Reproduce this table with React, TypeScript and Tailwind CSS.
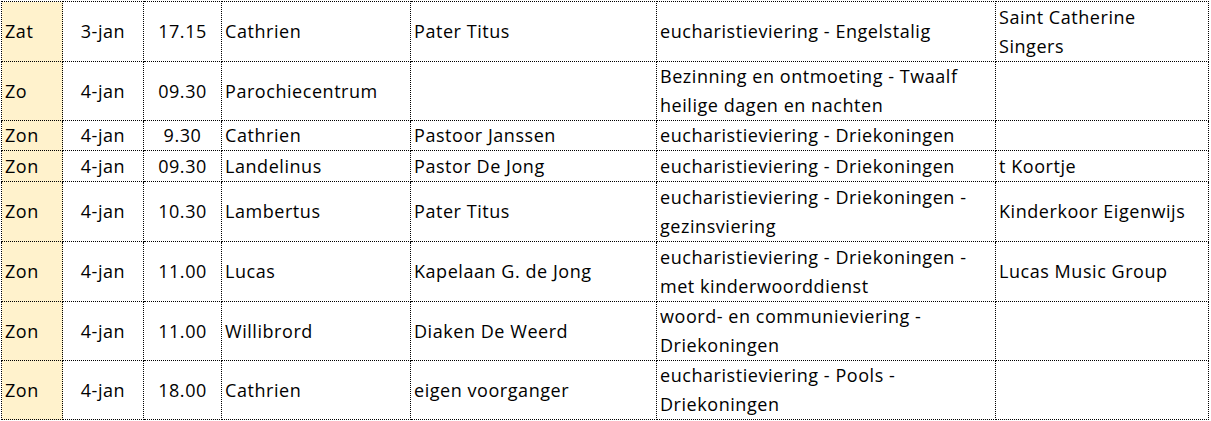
const rows: {
  day: string;
  date: string;
  time: string;
  place: string;
  priest: string;
  desc: string[];
  choir: string[];
  h: string;
}[] = [
  { day: 'Zat', date: '3-jan', time: '17.15', place: 'Cathrien', priest: 'Pater Titus', desc: ['eucharistieviering - Engelstalig'], choir: ['Saint Catherine', 'Singers'], h: 'h-[60px]' },
  { day: 'Zo', date: '4-jan', time: '09.30', place: 'Parochiecentrum', priest: '', desc: ['Bezinning en ontmoeting - Twaalf', 'heilige dagen en nachten'], choir: [], h: 'h-[59px]' },
  { day: 'Zon', date: '4-jan', time: '9.30', place: 'Cathrien', priest: 'Pastoor Janssen', desc: ['eucharistieviering - Driekoningen'], choir: [], h: 'h-[30px]' },
  { day: 'Zon', date: '4-jan', time: '09.30', place: 'Landelinus', priest: 'Pastor De Jong', desc: ['eucharistieviering - Driekoningen'], choir: ['t Koortje'], h: 'h-[31px]' },
  { day: 'Zon', date: '4-jan', time: '10.30', place: 'Lambertus', priest: 'Pater Titus', desc: ['eucharistieviering - Driekoningen -', 'gezinsviering'], choir: ['Kinderkoor Eigenwijs'], h: 'h-[60px]' },
  { day: 'Zon', date: '4-jan', time: '11.00', place: 'Lucas', priest: 'Kapelaan G. de Jong', desc: ['eucharistieviering - Driekoningen -', 'met kinderwoorddienst'], choir: ['Lucas Music Group'], h: 'h-[60px]' },
  { day: 'Zon', date: '4-jan', time: '11.00', place: 'Willibrord', priest: 'Diaken De Weerd', desc: ['woord- en communieviering -', 'Driekoningen'], choir: [], h: 'h-[59px]' },
  { day: 'Zon', date: '4-jan', time: '18.00', place: 'Cathrien', priest: 'eigen voorganger', desc: ['eucharistieviering - Pools -', 'Driekoningen'], choir: [], h: 'h-[59px]' },
];

const cell = 'border border-dotted border-black px-[3px] py-0 align-middle whitespace-nowrap';

function Lines({ lines }: { lines: string[] }) {
  return (
    <>
      {lines.map((l, i) => (
        <div key={i}>{l}</div>
      ))}
    </>
  );
}

export default function App() {
  return (
    <div className="w-[1211px] h-[421px] bg-white pt-[1px] pl-[1px] overflow-hidden">
      <table
        className="table-fixed border-collapse text-[18px] leading-[29px] tracking-[0.55px] text-black"
        style={{ fontFamily: '"Open Sans", Lato, sans-serif' }}
      >
        <colgroup>
          <col className="w-[61px]" />
          <col className="w-[81px]" />
          <col className="w-[78px]" />
          <col className="w-[189px]" />
          <col className="w-[246px]" />
          <col className="w-[339px]" />
          <col className="w-[213px]" />
        </colgroup>
        <tbody>
          {rows.map((r, i) => (
            <tr key={i} className={r.h}>
              <td className={cell + ' bg-[#fff2cc]'}>{r.day}</td>
              <td className={cell + ' text-center'}>{r.date}</td>
              <td className={cell + ' text-center'}>{r.time}</td>
              <td className={cell}>{r.place}</td>
              <td className={cell}>{r.priest}</td>
              <td className={cell}>
                <Lines lines={r.desc} />
              </td>
              <td className={cell}>
                <Lines lines={r.choir} />
              </td>
            </tr>
          ))}
        </tbody>
      </table>
    </div>
  );
}
